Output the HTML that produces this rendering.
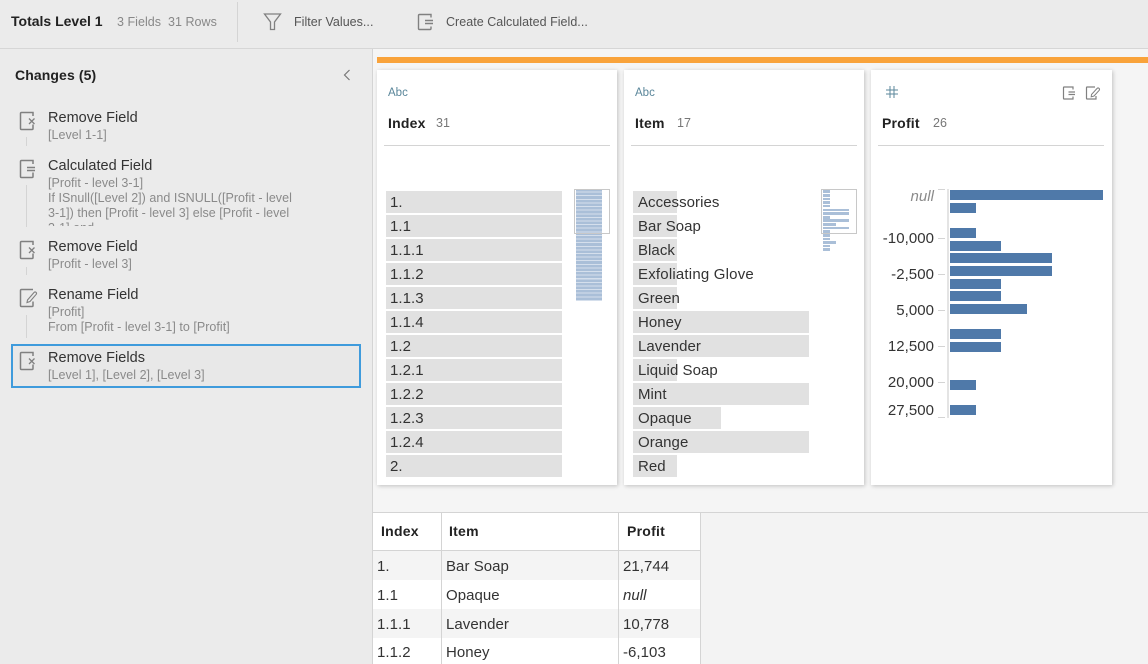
<!DOCTYPE html>
<html><head><meta charset="utf-8"><style>
html,body{margin:0;padding:0;width:1148px;height:664px;overflow:hidden;background:#f5f5f5;font-family:"Liberation Sans",sans-serif;color:#2a2a2a}
div,span,svg{position:absolute;white-space:nowrap;box-sizing:border-box}
.ti{font-size:14.5px;letter-spacing:.02px;color:#333;line-height:18px;margin-top:1px}
.su{font-size:12.5px;letter-spacing:.03px;color:#8a8a8a;line-height:15px}
.b{font-weight:bold}
.card{background:#fff;width:240px;height:415px;top:70px;box-shadow:1px 1px 4px rgba(0,0,0,.22)}
.dv{height:1px;top:145px;width:226px;background:#d4d4d4}
.abc{top:86px;font-size:11.5px;color:#5b879b;line-height:14px}
.h{top:114px;font-size:14px;font-weight:bold;letter-spacing:.2px;color:#222;line-height:18px}
.n{top:115px;font-size:12.5px;color:#777;letter-spacing:.1px;line-height:16px}
.r{height:22px;background:#e1e1e1}
.v{font-size:15px;letter-spacing:.05px;line-height:18px;color:#333;margin-top:1px}
.p{left:950px;height:10px;background:#4f79a9}
.al{right:214px;font-size:15px;letter-spacing:.05px;line-height:18px;color:#333;text-align:right;margin-top:1px}
.tk{left:938px;width:7px;height:1px;background:#d4d4d4}
.m{background:#aabfd8;height:2.6px}
.th{top:522px;font-size:14px;font-weight:bold;letter-spacing:.25px;line-height:18px;color:#222}
.td{font-size:15px;letter-spacing:.05px;line-height:18px;color:#333;margin-top:1px}
.ln{background:#d4d4d4}
</style></head><body>

<!-- left panel & top bar -->
<div style="left:0;top:0;width:1148px;height:48px;background:#ebebeb"></div>
<div style="left:0;top:48px;width:1148px;height:1px;background:#d6d6d6"></div>
<div style="left:0;top:49px;width:372px;height:615px;background:#ebebeb"></div>
<div style="left:372px;top:49px;width:1px;height:615px;background:#d4d4d4"></div>
<div style="left:237px;top:2px;width:1px;height:40px;background:#d4d4d4"></div>

<div class="b" style="left:11px;top:12px;font-size:14px;line-height:18px;color:#222">Totals Level 1</div>
<div class="su" style="left:117px;top:15px;color:#888">3 Fields&nbsp; 31 Rows</div>
<svg style="left:263px;top:13px" width="20" height="18" viewBox="0 0 20 18" fill="none" stroke="#808080" stroke-width="1.3"><path d="M1.500 1h16l-6 8v7.500h-4V9z"/></svg>
<div class="su" style="left:294px;top:15px;color:#555">Filter Values...</div>
<svg style="left:417px;top:13px" width="18" height="18" viewBox="0 0 18 18" fill="none" stroke="#808080" stroke-width="1.4"><path d="M14 4.500V1.500H2.500Q1.500 1.500 1.500 2.500v13q0 1 1 1H13q1 0 1-1v-2M8 7.500h8M8 10.500h8"/></svg>
<div class="su" style="left:446px;top:15px;color:#555">Create Calculated Field...</div>

<div class="b" style="left:15px;top:66px;font-size:14px;letter-spacing:.1px;line-height:18px;color:#222">Changes (5)</div>
<svg style="left:342px;top:68px" width="10" height="14" viewBox="0 0 10 14" fill="none" stroke="#777" stroke-width="1.200"><path d="M7.500 2 2.500 7 7.500 12"/></svg>

<!-- change items -->
<svg style="left:19px;top:111px" width="18" height="20" viewBox="0 0 18 20" fill="none" stroke="#808080" stroke-width="1.5"><path d="M14 5V1.500H2.500Q1.500 1.500 1.500 2.500v15q0 1 1 1H13q1 0 1-1v-4"/><path stroke-width="1.300" d="M10 7.500l5.500 5.500M15.500 7.500l-5.500 5.500"/></svg>
<div class="ti" style="left:48px;top:108px">Remove Field</div>
<div class="su" style="left:48px;top:128px">[Level 1-1]</div>
<div style="left:26px;top:137px;width:1px;height:9px;background:#d4d4d4"></div>

<svg style="left:19px;top:159px" width="18" height="20" viewBox="0 0 18 20" fill="none" stroke="#808080" stroke-width="1.5"><path d="M14 5V1.500H2.500Q1.500 1.500 1.500 2.500v15q0 1 1 1H13q1 0 1-1v-4M8 8.500h8M8 11.500h8"/></svg>
<div class="ti" style="left:48px;top:156px">Calculated Field</div>
<div style="left:48px;top:176px;width:270px;height:50px;overflow:hidden">
<div class="su" style="left:0;top:0">[Profit - level 3-1]</div>
<div class="su" style="left:0;top:15px">If ISnull([Level 2]) and ISNULL([Profit - level</div>
<div class="su" style="left:0;top:30px">3-1]) then [Profit - level 3] else [Profit - level</div>
<div class="su" style="left:0;top:45px">3-1] end</div>
</div>
<div style="left:26px;top:185px;width:1px;height:42px;background:#d4d4d4"></div>

<svg style="left:19px;top:240px" width="18" height="20" viewBox="0 0 18 20" fill="none" stroke="#808080" stroke-width="1.5"><path d="M14 5V1.500H2.500Q1.500 1.500 1.500 2.500v15q0 1 1 1H13q1 0 1-1v-4"/><path stroke-width="1.300" d="M10 7.500l5.500 5.500M15.500 7.500l-5.500 5.500"/></svg>
<div class="ti" style="left:48px;top:237px">Remove Field</div>
<div class="su" style="left:48px;top:257px">[Profit - level 3]</div>
<div style="left:26px;top:267px;width:1px;height:8px;background:#d4d4d4"></div>

<svg style="left:19px;top:288px" width="20" height="20" viewBox="0 0 20 20" fill="none" stroke="#808080" stroke-width="1.5"><path d="M14 1.500H2.500Q1.500 1.500 1.500 2.500v15q0 1 1 1H13q1 0 1-1v-4"/><path stroke-width="1.100" d="M8.500 12 15 4.500q1-1 2-.2t.2 2L11 13.500l-3 1z"/></svg>
<div class="ti" style="left:48px;top:285px">Rename Field</div>
<div class="su" style="left:48px;top:305px">[Profit]</div>
<div class="su" style="left:48px;top:320px">From [Profit - level 3-1] to [Profit]</div>
<div style="left:26px;top:315px;width:1px;height:23px;background:#d4d4d4"></div>

<div style="left:11px;top:344px;width:350px;height:44px;border:2px solid #3f9bdc;background:#e8e8e8"></div>
<svg style="left:19px;top:351px" width="18" height="20" viewBox="0 0 18 20" fill="none" stroke="#808080" stroke-width="1.5"><path d="M14 5V1.500H2.500Q1.500 1.500 1.500 2.500v15q0 1 1 1H13q1 0 1-1v-4"/><path stroke-width="1.300" d="M10 7.500l5.500 5.500M15.500 7.500l-5.500 5.500"/></svg>
<div class="ti" style="left:48px;top:348px">Remove Fields</div>
<div class="su" style="left:48px;top:368px">[Level 1], [Level 2], [Level 3]</div>

<!-- orange bar -->
<div style="left:377px;top:57px;width:771px;height:6px;background:#f9a33b"></div>

<!-- cards -->
<div class="card" style="left:377px"></div>
<div class="card" style="left:624px"></div>
<div class="card" style="left:871px;width:241px"></div>
<div class="dv" style="left:384px"></div>
<div class="dv" style="left:631px"></div>
<div class="dv" style="left:878px"></div>

<div class="abc" style="left:388px">Abc</div>
<div class="abc" style="left:635px">Abc</div>
<svg style="left:885px;top:85px" width="14" height="14" viewBox="0 0 14 14" fill="none" stroke="#5b879b" stroke-width="1"><path d="M1 5h12M1 9h12M5 1v12M9 1v12"/></svg>
<svg style="left:1062px;top:86px" width="14" height="14" viewBox="0 0 14 14" fill="none" stroke="#808080" stroke-width="1.200"><path d="M11 3.500V1H2Q1.500 1 1.500 2v10q0 1 .5 1h9v-2.500M6.500 6h6.500M6.500 8.500h6.500"/></svg>
<svg style="left:1085px;top:86px" width="16" height="14" viewBox="0 0 16 14" fill="none" stroke="#808080" stroke-width="1.200"><path d="M10 1H2Q1.500 1 1.500 2v10q0 1 .5 1h9v-3"/><path stroke-width="1" d="M6.500 8.500 12 2.500q1-1 2-.2t.2 2L9 10l-2.800.8z"/></svg>

<div class="h" style="left:388px">Index</div><div class="n" style="left:436px">31</div>
<div class="h" style="left:635px">Item</div><div class="n" style="left:677px">17</div>
<div class="h" style="left:882px">Profit</div><div class="n" style="left:933px">26</div>

<!-- index rows -->
<div class="r" style="left:386px;top:191px;width:176px"></div><div class="v" style="left:390px;top:193px">1.</div>
<div class="r" style="left:386px;top:215px;width:176px"></div><div class="v" style="left:390px;top:217px">1.1</div>
<div class="r" style="left:386px;top:239px;width:176px"></div><div class="v" style="left:390px;top:241px">1.1.1</div>
<div class="r" style="left:386px;top:263px;width:176px"></div><div class="v" style="left:390px;top:265px">1.1.2</div>
<div class="r" style="left:386px;top:287px;width:176px"></div><div class="v" style="left:390px;top:289px">1.1.3</div>
<div class="r" style="left:386px;top:311px;width:176px"></div><div class="v" style="left:390px;top:313px">1.1.4</div>
<div class="r" style="left:386px;top:335px;width:176px"></div><div class="v" style="left:390px;top:337px">1.2</div>
<div class="r" style="left:386px;top:359px;width:176px"></div><div class="v" style="left:390px;top:361px">1.2.1</div>
<div class="r" style="left:386px;top:383px;width:176px"></div><div class="v" style="left:390px;top:385px">1.2.2</div>
<div class="r" style="left:386px;top:407px;width:176px"></div><div class="v" style="left:390px;top:409px">1.2.3</div>
<div class="r" style="left:386px;top:431px;width:176px"></div><div class="v" style="left:390px;top:433px">1.2.4</div>
<div class="r" style="left:386px;top:455px;width:176px"></div><div class="v" style="left:390px;top:457px">2.</div>

<!-- index minimap -->
<div style="left:576px;top:189px;width:26px;height:112px;background:repeating-linear-gradient(to bottom,#aabfd8 0,#aabfd8 2.600px,#d5dfec 2.600px,#d5dfec 3.610px)"></div>
<div style="left:574px;top:189px;width:36px;height:45px;border:1px solid #c8c8c8"></div>

<!-- item rows -->
<div class="r" style="left:633px;top:191px;width:44px"></div><div class="v" style="left:638px;top:193px">Accessories</div>
<div class="r" style="left:633px;top:215px;width:44px"></div><div class="v" style="left:638px;top:217px">Bar Soap</div>
<div class="r" style="left:633px;top:239px;width:44px"></div><div class="v" style="left:638px;top:241px">Black</div>
<div class="r" style="left:633px;top:263px;width:44px"></div><div class="v" style="left:638px;top:265px;letter-spacing:.2px">Exfoliating Glove</div>
<div class="r" style="left:633px;top:287px;width:44px"></div><div class="v" style="left:638px;top:289px">Green</div>
<div class="r" style="left:633px;top:311px;width:176px"></div><div class="v" style="left:638px;top:313px">Honey</div>
<div class="r" style="left:633px;top:335px;width:176px"></div><div class="v" style="left:638px;top:337px">Lavender</div>
<div class="r" style="left:633px;top:359px;width:44px"></div><div class="v" style="left:638px;top:361px">Liquid Soap</div>
<div class="r" style="left:633px;top:383px;width:176px"></div><div class="v" style="left:638px;top:385px">Mint</div>
<div class="r" style="left:633px;top:407px;width:88px"></div><div class="v" style="left:638px;top:409px">Opaque</div>
<div class="r" style="left:633px;top:431px;width:176px"></div><div class="v" style="left:638px;top:433px">Orange</div>
<div class="r" style="left:633px;top:455px;width:44px"></div><div class="v" style="left:638px;top:457px">Red</div>

<!-- item minimap -->
<div class="m" style="left:823px;top:190px;width:7px"></div>
<div class="m" style="left:823px;top:194px;width:7px"></div>
<div class="m" style="left:823px;top:197.500px;width:7px"></div>
<div class="m" style="left:823px;top:201px;width:7px"></div>
<div class="m" style="left:823px;top:204.500px;width:7px"></div>
<div class="m" style="left:823px;top:208.500px;width:26px"></div>
<div class="m" style="left:823px;top:212px;width:26px"></div>
<div class="m" style="left:823px;top:216px;width:7px"></div>
<div class="m" style="left:823px;top:219px;width:26px"></div>
<div class="m" style="left:823px;top:223px;width:13px"></div>
<div class="m" style="left:823px;top:226.500px;width:26px"></div>
<div class="m" style="left:823px;top:230px;width:7px"></div>
<div class="m" style="left:823px;top:234px;width:7px"></div>
<div class="m" style="left:823px;top:237.500px;width:7px"></div>
<div class="m" style="left:823px;top:241px;width:13px"></div>
<div class="m" style="left:823px;top:244.500px;width:7px"></div>
<div class="m" style="left:823px;top:248px;width:7px"></div>
<div style="left:821px;top:189px;width:36px;height:45px;border:1px solid #c8c8c8"></div>

<!-- profit chart -->
<div style="left:947px;top:189px;width:2px;height:229px;background:#e4e4e4"></div>
<div class="tk" style="top:189px"></div>
<div class="tk" style="top:238px"></div>
<div class="tk" style="top:274px"></div>
<div class="tk" style="top:310px"></div>
<div class="tk" style="top:346px"></div>
<div class="tk" style="top:382px"></div>
<div class="tk" style="top:417px"></div>
<div class="al" style="top:187px;font-style:italic;color:#8a8a8a">null</div>
<div class="al" style="top:229px">-10,000</div>
<div class="al" style="top:265px">-2,500</div>
<div class="al" style="top:301px">5,000</div>
<div class="al" style="top:337px">12,500</div>
<div class="al" style="top:373px">20,000</div>
<div class="al" style="top:401px">27,500</div>
<div class="p" style="top:190px;width:153px"></div>
<div class="p" style="top:203px;width:26px"></div>
<div class="p" style="top:228px;width:26px"></div>
<div class="p" style="top:241px;width:51px"></div>
<div class="p" style="top:253px;width:102px"></div>
<div class="p" style="top:266px;width:102px"></div>
<div class="p" style="top:279px;width:51px"></div>
<div class="p" style="top:291px;width:51px"></div>
<div class="p" style="top:304px;width:77px"></div>
<div class="p" style="top:329px;width:51px"></div>
<div class="p" style="top:342px;width:51px"></div>
<div class="p" style="top:380px;width:26px"></div>
<div class="p" style="top:405px;width:26px"></div>

<!-- table -->
<div style="left:373px;top:513px;width:775px;height:151px;background:#f3f3f3"></div>
<div style="left:373px;top:512px;width:775px;height:1px;background:#d4d4d4"></div>
<div style="left:373px;top:513px;width:328px;height:37px;background:#fff"></div>
<div style="left:373px;top:551px;width:328px;height:29px;background:#f4f4f4"></div>
<div style="left:373px;top:580px;width:328px;height:29px;background:#fff"></div>
<div style="left:373px;top:609px;width:328px;height:29px;background:#f4f4f4"></div>
<div style="left:373px;top:638px;width:328px;height:26px;background:#fff"></div>
<div class="ln" style="left:373px;top:550px;width:328px;height:1px"></div>
<div class="ln" style="left:441px;top:513px;width:1px;height:151px"></div>
<div class="ln" style="left:618px;top:513px;width:1px;height:151px"></div>
<div class="ln" style="left:700px;top:513px;width:1px;height:151px"></div>
<div class="th" style="left:381px">Index</div>
<div class="th" style="left:449px">Item</div>
<div class="th" style="left:627px">Profit</div>
<div class="td" style="left:377px;top:557px">1.</div>
<div class="td" style="left:446px;top:557px">Bar Soap</div>
<div class="td" style="left:623px;top:557px">21,744</div>
<div class="td" style="left:377px;top:586px">1.1</div>
<div class="td" style="left:446px;top:586px">Opaque</div>
<div class="td" style="left:623px;top:586px;font-style:italic">null</div>
<div class="td" style="left:377px;top:615px">1.1.1</div>
<div class="td" style="left:446px;top:615px">Lavender</div>
<div class="td" style="left:623px;top:615px">10,778</div>
<div class="td" style="left:377px;top:643px">1.1.2</div>
<div class="td" style="left:446px;top:643px">Honey</div>
<div class="td" style="left:623px;top:643px">-6,103</div>
</body></html>
